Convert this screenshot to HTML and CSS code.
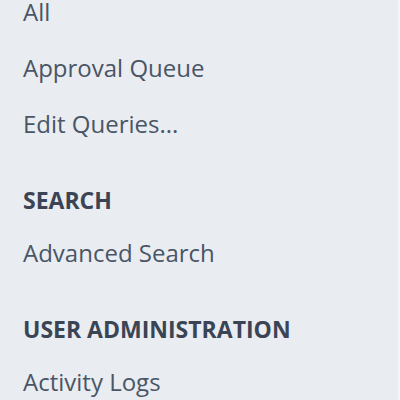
FILE: index.html
```html
<!DOCTYPE html>
<html lang="en">
<head>
    <meta charset="UTF-8">
    <meta name="viewport" content="width=device-width, initial-scale=1.0">
    <title>Queues</title>
    <link rel="stylesheet" href="styles.css">
</head>
<body>
    <nav class="sidebar">
        <div class="nav-group">
            <a class="nav-link" href="#">All</a>
            <a class="nav-link" href="#">Approval Queue</a>
            <a class="nav-link" href="#">Edit Queries...</a>
        </div>

        <div class="nav-group">
            <h2 class="nav-heading">SEARCH</h2>
            <a class="nav-link" href="#">Advanced Search</a>
        </div>

        <div class="nav-group">
            <h2 class="nav-heading">USER ADMINISTRATION</h2>
            <a class="nav-link" href="#">Activity Logs</a>
        </div>
    </nav>
</body>
</html>
```

FILE: styles.css
```css
html,
body {
    margin: 0;
    padding: 0;
    height: 100%;
}

body {
    font-family: 'Open Sans', 'Noto Sans', sans-serif;
    background-color: #e9ecf0;
}

.sidebar {
    display: flex;
    flex-direction: column;
    gap: 52px;
    box-sizing: border-box;
    min-height: 100%;
    padding: 0 0 0 23px;
    border-right: 2px solid #f3f5f7;
}

.nav-group {
    display: flex;
    flex-direction: column;
    gap: 32px;
}

.nav-heading {
    margin: 0 0 -3px;
    font-size: 23px;
    line-height: 24px;
    font-weight: 700;
    color: #3b4454;
}

.nav-link {
    font-size: 24px;
    line-height: 24px;
    color: #4a5566;
    text-decoration: none;
}
```
